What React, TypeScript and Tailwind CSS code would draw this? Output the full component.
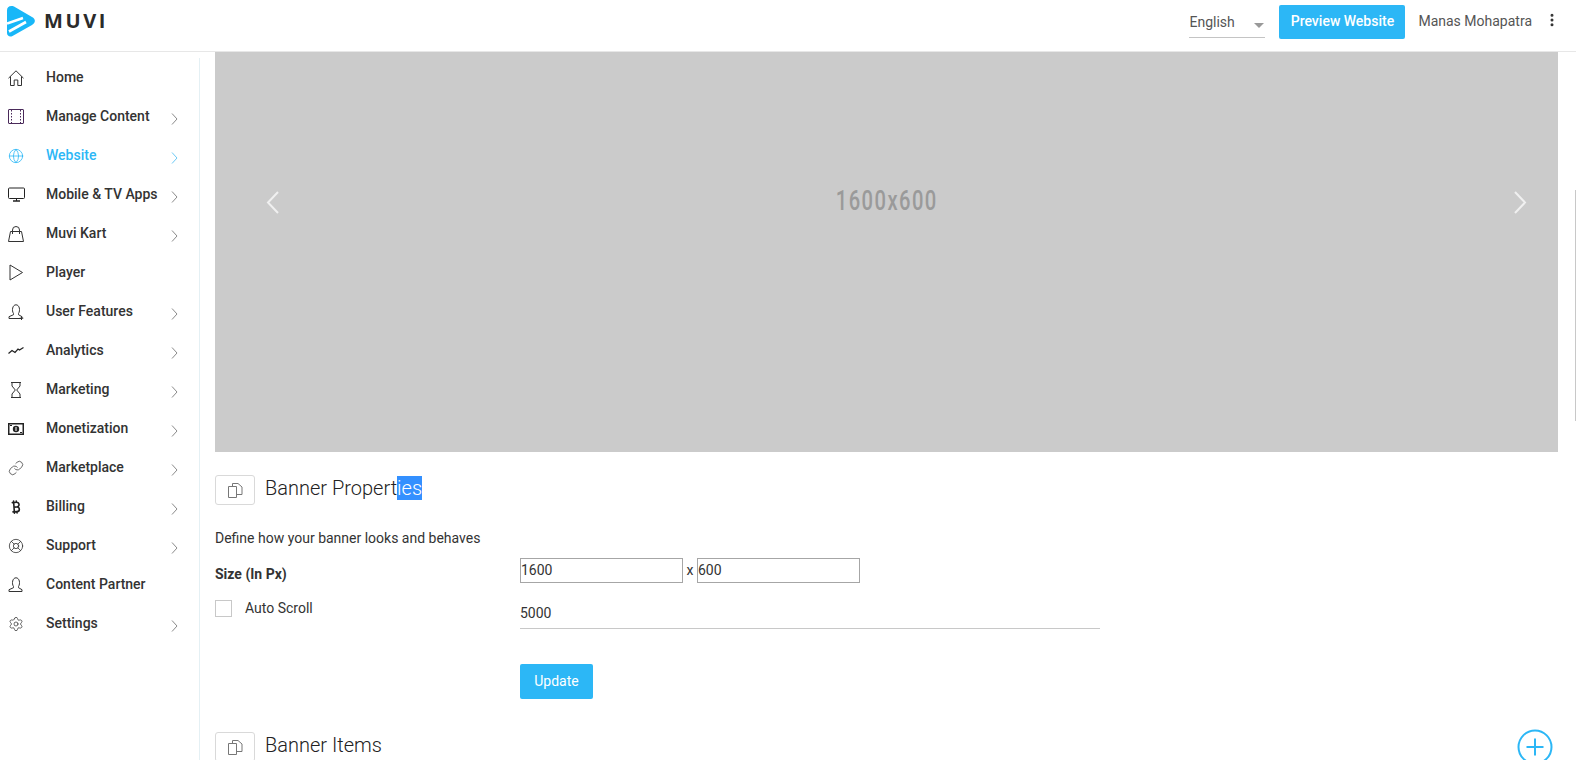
import React from "react";
import { Bitcoin, Globe, LifeBuoy, Link, MoreVertical, Settings } from "lucide-react";

const HomeIcon = () => (
  <svg width="16" height="16" viewBox="0 0 16 16" fill="none" stroke="#333" strokeWidth="1">
    <path d="M0.5 8.2 8 0.8l7.5 7.4M2.5 6.5v9h3.7v-5.5h3.6v5.5h3.7v-9" />
  </svg>
);

const FilmIcon = () => (
  <svg width="16" height="16" viewBox="0 0 16 16" fill="none" stroke="#4a2a5a" strokeWidth="1">
    <rect x="0.5" y="0.5" width="15" height="14" rx="0.5" />
    <path d="M3.5 1v13.5M12.5 1v13.5" strokeDasharray="1.5 1.5" />
  </svg>
);

const MonitorIcon = () => (
  <svg width="17" height="16" viewBox="0 0 17 16" fill="none" stroke="#222" strokeWidth="1">
    <rect x="0.5" y="1" width="16" height="10.5" rx="1" />
    <path d="M5 14h7" strokeWidth="1.5" />
    <path d="M8.5 11.5V14" />
  </svg>
);

const BagIcon = () => (
  <svg width="16" height="16" viewBox="0 0 16 16" fill="none" stroke="#333" strokeWidth="1">
    <path d="M2.5 5.5h11l2 10H0.5z" />
    <path d="M4.5 8V4a3.5 3.5 0 0 1 7 0v4" />
  </svg>
);

const PlayIcon = () => (
  <svg width="16" height="17" viewBox="0 0 16 17" fill="none" stroke="#333" strokeWidth="1">
    <path d="M2 1l12.5 7.5L2 16z" />
  </svg>
);

const UserOutline = ({ plus }: { plus?: boolean }) => (
  <svg width="16" height="16" viewBox="0 0 16 16" fill="none" stroke="#333" strokeWidth="1">
    <path d="M5.5 9.5C3.5 6.5 4.5 0.8 8 0.8s4.5 5.7 2.5 8.7v1.2l3.5 2v1.8H1v-1.8l4.5-2z" />
    {plus && <path d="M13.5 12.5v3.5M11.7 14.2h3.6" />}
  </svg>
);

const TrendIcon = () => (
  <svg width="16" height="16" viewBox="0 0 16 16" fill="none" stroke="#222" strokeWidth="1.2">
    <path d="M0.5 10.5 4 7.5l3 2 3-3.5 1.5 1L15.5 4.5" />
  </svg>
);

const HourglassIcon = () => (
  <svg width="16" height="16" viewBox="0 0 16 16" fill="none" stroke="#333" strokeWidth="1">
    <path d="M3 0.5h10M3 15.5h10M4 1v3l3.3 4L4 12v3.5M12 1v3L8.7 8l3.3 4v3.5" />
  </svg>
);

const CashIcon = () => (
  <svg width="16" height="16" viewBox="0 0 16 16" fill="none" stroke="#222">
    <rect x="0.75" y="2.75" width="14.5" height="10.5" strokeWidth="1.5" />
    <circle cx="8" cy="8" r="3.2" fill="#222" stroke="none" />
    <path d="M8 6v4" stroke="#fff" />
    <path d="M2 4.5h2M12 11.5h2" strokeWidth="1" />
  </svg>
);

const SideChevron = ({ color }: { color: string }) => (
  <svg width="7" height="12" viewBox="0 0 7 12" fill="none" stroke={color} strokeWidth="1">
    <path d="M1 0.5 6 6l-5 5.5" />
  </svg>
);

const menu = [
  { label: "Home", icon: <HomeIcon /> },
  { label: "Manage Content", icon: <FilmIcon />, arrow: true },
  { label: "Website", icon: <Globe size={16} strokeWidth={1.2} color="#2cb7f6" />, arrow: true, active: true },
  { label: "Mobile & TV Apps", icon: <MonitorIcon />, arrow: true },
  { label: "Muvi Kart", icon: <BagIcon />, arrow: true },
  { label: "Player", icon: <PlayIcon /> },
  { label: "User Features", icon: <UserOutline plus />, arrow: true },
  { label: "Analytics", icon: <TrendIcon />, arrow: true },
  { label: "Marketing", icon: <HourglassIcon />, arrow: true },
  { label: "Monetization", icon: <CashIcon />, arrow: true },
  { label: "Marketplace", icon: <Link size={16} strokeWidth={1.1} color="#333" />, arrow: true },
  { label: "Billing", icon: <Bitcoin size={16} strokeWidth={2.4} color="#222" className="-rotate-[14deg]" />, arrow: true },
  { label: "Support", icon: <LifeBuoy size={16} strokeWidth={1.2} color="#333" />, arrow: true },
  { label: "Content Partner", icon: <UserOutline /> },
  { label: "Settings", icon: <Settings size={16} strokeWidth={1.1} color="#333" />, arrow: true },
];

const Logo = () => (
  <div className="flex items-center">
    <svg width="28" height="31" viewBox="0 0 28 31">
      <path d="M4.5 0C1.5 0 0 1.5 0 4.5V27c0 3 3 4.5 5.5 3L25 19c3.8-2.2 3.8-6.3 0-8L7 0.5C6 0.1 5.3 0 4.5 0Z" fill="#18b7f8" />
      <path d="M0 17.5 16 12M2 25.5 19 16" stroke="#fff" strokeWidth="2.6" />
    </svg>
    <span className="-mt-[2px] ml-[9px] font-['Open_Sans',sans-serif] text-[20px] font-bold tracking-[2.6px] text-[#2b2b2b]">MUVI</span>
  </div>
);

const PagesIcon = () => (
  <svg width="15" height="15" viewBox="0 0 15 15" fill="none" stroke="#777" strokeWidth="1">
    <path d="M0.5 3.5h8v11h-8zM4.5 3V0.5h5.5l4 3.5v7.5H9" />
  </svg>
);

const SectionHead = ({ title, selected }: { title: string; selected?: string }) => (
  <div className="flex items-center">
    <div className="flex h-[30px] w-[40px] items-center justify-center rounded-[3px] border border-[#d9d9d9]">
      <PagesIcon />
    </div>
    <h3 className="ml-[10px] pb-[4px] text-[20px] leading-[24px] font-light text-[#222]">
      {title}
      {selected && <span className="bg-[#3390ff] text-white">{selected}</span>}
    </h3>
  </div>
);

export default function App() {
  return (
    <div className="flex h-screen flex-col overflow-hidden bg-white font-['Roboto',sans-serif] text-[14px] text-[#333]">
      <header className="flex h-[52px] shrink-0 items-start justify-between border-b border-[#e7e7e7] pl-[7px]">
        <div className="pt-[6px]">
          <Logo />
        </div>
        <div className="flex items-start pt-[5px]">
          <div className="relative flex h-[33px] w-[76px] items-end border-b border-[#c4c4c4] pb-[4px] text-[#555]">
            English
            <span className="absolute top-[18px] right-[1px] border-x-[5px] border-t-[5px] border-x-transparent border-t-[#999]" />
          </div>
          <button className="ml-[14px] h-[34px] w-[126px] rounded-[2px] bg-[#2cb7f6] pb-[1px] font-medium text-white">Preview Website</button>
          <span className="ml-[13px] pt-[6px] text-[#555]">Manas Mohapatra</span>
          <MoreVertical size={16} strokeWidth={2.5} color="#333" className="mt-[7px] mr-[16px] ml-[12px]" />
        </div>
      </header>

      <div className="flex min-h-0 flex-1">
        <aside className="mt-[6px] w-[200px] shrink-0 border-r border-[#e4f0f4]">
          {menu.map((item) => (
            <div key={item.label} className="flex h-[39px] items-center">
              <span className="flex w-[46px] shrink-0 justify-start pl-[8px]">{item.icon}</span>
              <span className={item.active ? "w-[125px] font-medium text-[#2cb7f6]" : "w-[125px] font-medium text-[#333]"}>{item.label}</span>
              {item.arrow && (
                <span className="mt-[5px]">
                  <SideChevron color={item.active ? "#6cc9f5" : "#8a8a8a"} />
                </span>
              )}
            </div>
          ))}
        </aside>

        <main className="relative min-w-0 flex-1 pr-[18px] pl-[15px]">
          <div className="relative flex h-[400px] items-center justify-center bg-[#cbcbcb] pb-[102px]">
            <svg width="13" height="23" viewBox="0 0 13 23" fill="none" stroke="#f0f0f0" strokeWidth="2" className="absolute top-[139px] left-[51px]">
              <path d="M12 1 2 11.5 12 22" />
            </svg>
            <span className="scale-x-[0.72] text-[28px] font-medium tracking-[2px] text-[#9a9a9a]">1600x600</span>
            <svg width="13" height="23" viewBox="0 0 13 23" fill="none" stroke="#f0f0f0" strokeWidth="2" className="absolute top-[139px] right-[31px]">
              <path d="M1 1 11 11.5 1 22" />
            </svg>
          </div>

          <div className="mt-[23px]">
            <SectionHead title="Banner Propert" selected="ies" />
          </div>
          <p className="mt-[24px] leading-[18px]">Define how your banner looks and behaves</p>

          <div className="mt-[11px] flex">
            <div className="w-[305px] shrink-0">
              <div className="pt-[7px] leading-[18px] font-bold">Size (In Px)</div>
              <label className="mt-[15px] flex items-center">
                <span className="h-[17px] w-[17px] border border-[#c8c8c8]" />
                <span className="ml-[13px]">Auto Scroll</span>
              </label>
            </div>
            <div className="w-[580px]">
              <div className="flex items-center">
                <div className="h-[25px] w-[163px] border border-[#a6a6a6] leading-[23px]">1600</div>
                <span className="w-[14px] text-center">x</span>
                <div className="h-[25px] w-[163px] border border-[#a6a6a6] leading-[23px]">600</div>
              </div>
              <div className="mt-[18px] h-[28px] border-b border-[#c8c8c8] leading-[24px]">5000</div>
              <button className="mt-[35px] h-[35px] w-[73px] rounded-[2px] bg-[#2cb7f6] text-white">Update</button>
            </div>
          </div>

          <div className="mt-[30px] flex items-center justify-between">
            <SectionHead title="Banner Items" />
            <svg width="36" height="36" viewBox="0 0 36 36" fill="none" stroke="#2cb7f6" className="mr-[5px]">
              <circle cx="18" cy="18" r="16.5" strokeWidth="2" />
              <path d="M9.5 18h17M18 9.5v17" strokeWidth="2" />
            </svg>
          </div>
          <div className="absolute top-[138px] right-0 h-[231px] w-px bg-[#c8c8c8]" />
        </main>
      </div>
    </div>
  );
}
